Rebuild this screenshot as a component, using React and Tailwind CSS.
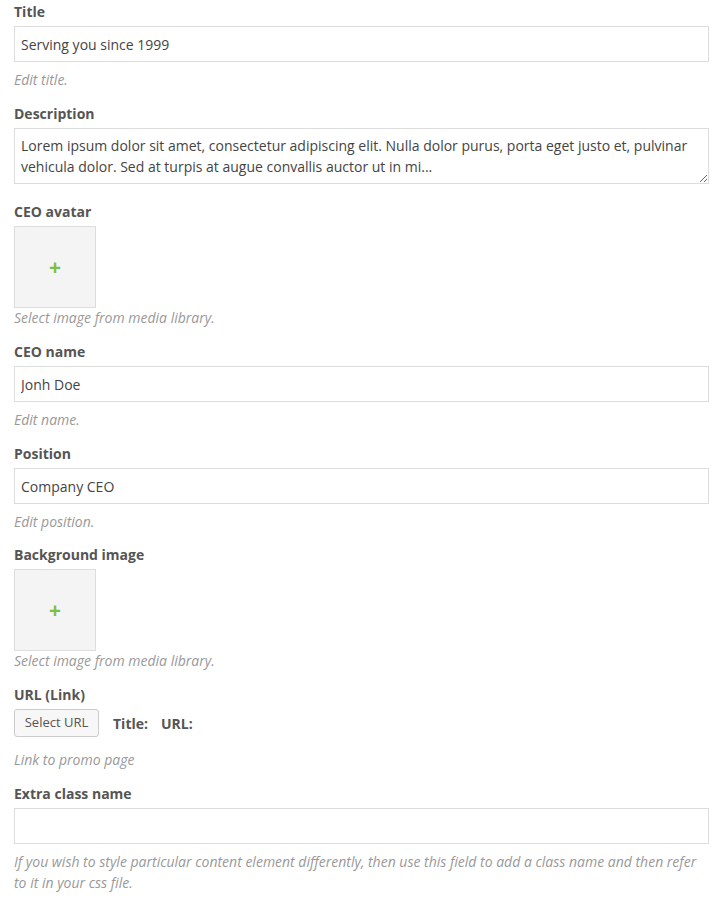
const FONT = "font-['Open_Sans',sans-serif]"

function Label({ children }) {
  return <div className="h-5 mb-1 text-[14px] leading-5 font-bold text-[#555]">{children}</div>
}

function Help({ children, className = '' }) {
  return <div className={`text-[14px] leading-5 italic text-[#999] ${className}`}>{children}</div>
}

function TextInput({ value }) {
  return (
    <input
      type="text"
      readOnly
      value={value}
      className="block w-full h-9 px-[6px] border border-[#ddd] bg-white text-[14px] text-[#444] outline-none"
    />
  )
}

function ImagePicker() {
  return (
    <div className="w-[82px] h-[82px] border border-[#ddd] bg-[#f4f4f4] flex items-center justify-center">
      <span className="text-[21px] leading-none text-[#79c044] font-bold">+</span>
    </div>
  )
}

export default function App() {
  return (
    <div className={`${FONT} bg-white min-h-[906px] px-[14px] pt-[2px] w-[723px]`}>
      <div className="w-[695px]">
        <div className="mb-[14px]">
          <Label>Title</Label>
          <TextInput value="Serving you since 1999" />
          <Help className="mt-2">Edit title.</Help>
        </div>

        <div className="mb-[18px]">
          <Label>Description</Label>
          <textarea
            readOnly
            value={'Lorem ipsum dolor sit amet, consectetur adipiscing elit. Nulla dolor purus, porta eget justo et, pulvinar vehicula dolor. Sed at turpis at augue convallis auctor ut in mi...'}
            className="block w-full h-[56px] px-[6px] py-[6px] border border-[#ddd] bg-white text-[14px] leading-[21px] text-[#444] outline-none resize-y"
          />
        </div>

        <div className="mb-[14px]">
          <Label>CEO avatar</Label>
          <ImagePicker />
          <Help>Select image from media library.</Help>
        </div>

        <div className="mb-[14px]">
          <Label>CEO name</Label>
          <TextInput value="Jonh Doe" />
          <Help className="mt-2">Edit name.</Help>
        </div>

        <div className="mb-[13px]">
          <Label>Position</Label>
          <TextInput value="Company CEO" />
          <Help className="mt-2">Edit position.</Help>
        </div>

        <div className="mb-[14px]">
          <Label>Background image</Label>
          <ImagePicker />
          <Help>Select image from media library.</Help>
        </div>

        <div className="mb-[14px]">
          <Label>URL (Link)</Label>
          <div className="flex items-center h-7">
            <button className="h-7 w-[85px] border border-[#ccc] rounded-[3px] bg-[#f7f7f7] text-[13px] text-[#555]">
              Select URL
            </button>
            <span className="ml-[14px] text-[14px] font-bold text-[#555]">Title:</span>
            <span className="ml-[13px] text-[14px] font-bold text-[#555]">URL:</span>
          </div>
          <Help className="mt-[13px]">Link to promo page</Help>
        </div>

        <div>
          <Label>Extra class name</Label>
          <TextInput value="" />
          <Help className="mt-[7px] leading-[21px]">
            If you wish to style particular content element differently, then use this field to add a class name and then refer to it in your css file.
          </Help>
        </div>
      </div>
    </div>
  )
}
